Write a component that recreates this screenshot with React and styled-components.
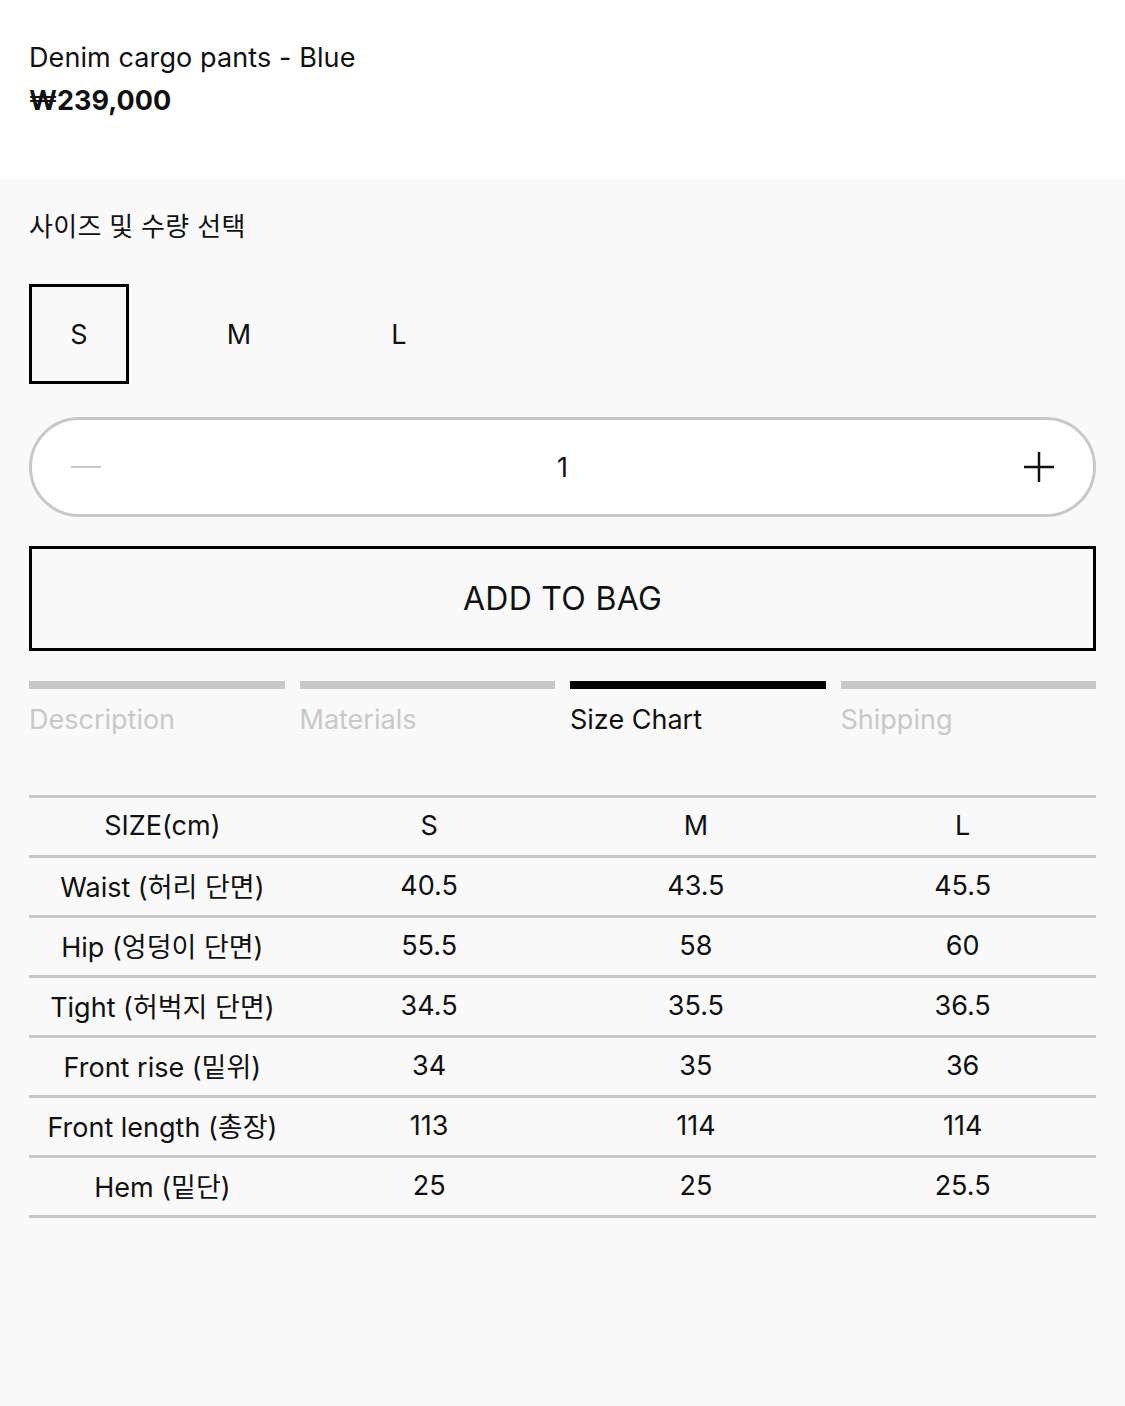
import React, { useState } from 'react'
import styled, { createGlobalStyle } from 'styled-components'

const Global = createGlobalStyle`
  html, body { margin:0; padding:0; background:#f9f9f9; }
  body { font-family: Inter, "Noto Sans CJK KR", sans-serif; color:#111; }
`

const Page = styled.div`
  width:1125px;
  min-height:1406px;
  background:#f9f9f9;
`

const Header = styled.div`
  background:#fff;
  height:179px;
  padding:38px 29px 0;
  box-sizing:border-box;
`

const Title = styled.div`
  font-size:27px;
  line-height:40px;
  letter-spacing:0.1px;
  color:#111;
`

const Price = styled.div`
  font-size:27px;
  font-weight:700;
  line-height:44px;
  margin-top:1px;
`

const Body = styled.div`
  padding:0 29px;
`

const Label = styled.div`
  font-size:26px;
  line-height:40px;
  padding-top:28px;
  letter-spacing:0.3px;
`

const SizeRow = styled.div`
  display:flex;
  gap:60px;
  margin-top:37px;
`

const SizeBox = styled.div`
  width:100px;
  height:100px;
  box-sizing:border-box;
  border:3px solid ${p => (p.$active ? '#000' : 'transparent')};
  display:flex;
  align-items:center;
  justify-content:center;
  font-size:27px;
`

const Qty = styled.div`
  margin-top:33px;
  height:100px;
  box-sizing:border-box;
  border:3px solid #c8c8c8;
  border-radius:50px;
  background:#fff;
  display:flex;
  align-items:center;
  justify-content:space-between;
  padding:0 38px;
`

const QtyBtn = styled.div`
  width:32px;
  height:32px;
  display:flex;
  align-items:center;
  justify-content:center;
`

const QtyNum = styled.div`
  font-size:27px;
`

const AddBtn = styled.div`
  margin-top:29px;
  height:105px;
  box-sizing:border-box;
  border:3px solid #000;
  display:flex;
  align-items:center;
  justify-content:center;
  font-size:32px;
  letter-spacing:0.3px;
`

const Tabs = styled.div`
  display:grid;
  grid-template-columns:repeat(4, 1fr);
  column-gap:15px;
  margin-top:30px;
`

const Tab = styled.div`
  border-top:8px solid ${p => (p.$active ? '#000' : '#c8c8c8')};
  color:${p => (p.$active ? '#111' : '#c8c8c8')};
  font-size:27px;
  line-height:40px;
  padding-top:11px;
`

const Table = styled.div`
  margin-top:55px;
  border-top:3px solid #c8c8c8;
`

const Row = styled.div`
  display:grid;
  grid-template-columns:repeat(4, 1fr);
  height:60px;
  box-sizing:border-box;
  border-bottom:3px solid #c8c8c8;
  align-items:center;
`

const Cell = styled.div`
  text-align:center;
  font-size:27px;
  padding-bottom:3px;
`

const rows = [
  ['SIZE(cm)', 'S', 'M', 'L'],
  ['Waist (허리 단면)', '40.5', '43.5', '45.5'],
  ['Hip (엉덩이 단면)', '55.5', '58', '60'],
  ['Tight (허벅지 단면)', '34.5', '35.5', '36.5'],
  ['Front rise (밑위)', '34', '35', '36'],
  ['Front length (총장)', '113', '114', '114'],
  ['Hem (밑단)', '25', '25', '25.5'],
]

const tabs = ['Description', 'Materials', 'Size Chart', 'Shipping']

const App = () => {
  const [size, setSize] = useState('S')
  const [tab, setTab] = useState('Size Chart')

  return (
    <>
      <Global />
      <Page>
        <Header>
          <Title>Denim cargo pants - Blue</Title>
          <Price>₩239,000</Price>
        </Header>
        <Body>
          <Label>사이즈 및 수량 선택</Label>
          <SizeRow>
            {['S', 'M', 'L'].map(s => (
              <SizeBox key={s} $active={size === s} onClick={() => setSize(s)}>{s}</SizeBox>
            ))}
          </SizeRow>
          <Qty>
            <QtyBtn>
              <svg width="32" height="32" viewBox="0 0 32 32">
                <line x1="1" y1="16" x2="31" y2="16" stroke="#c8c8c8" strokeWidth="2" />
              </svg>
            </QtyBtn>
            <QtyNum>1</QtyNum>
            <QtyBtn>
              <svg width="32" height="32" viewBox="0 0 32 32">
                <line x1="1" y1="16" x2="31" y2="16" stroke="#111" strokeWidth="2.5" />
                <line x1="16" y1="1" x2="16" y2="31" stroke="#111" strokeWidth="2.5" />
              </svg>
            </QtyBtn>
          </Qty>
          <AddBtn>ADD TO BAG</AddBtn>
          <Tabs>
            {tabs.map(t => (
              <Tab key={t} $active={tab === t} onClick={() => setTab(t)}>{t}</Tab>
            ))}
          </Tabs>
          <Table>
            {rows.map((r, i) => (
              <Row key={i}>
                {r.map((c, j) => <Cell key={j}>{c}</Cell>)}
              </Row>
            ))}
          </Table>
        </Body>
      </Page>
    </>
  )
}

export default App
